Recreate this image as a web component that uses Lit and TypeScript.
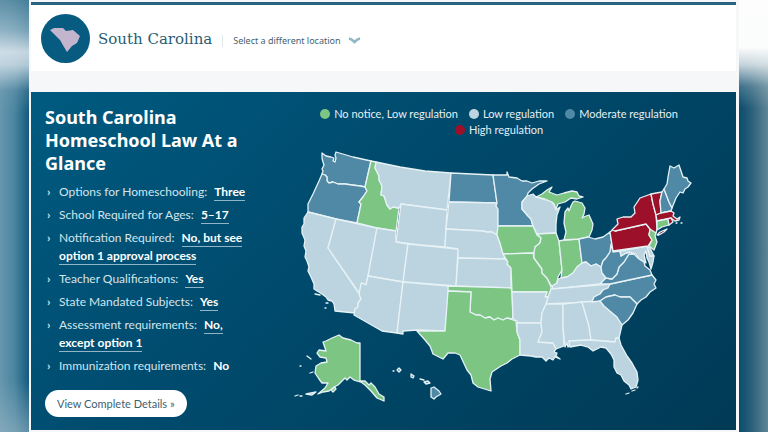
import { LitElement, html, css, svg } from 'lit';
import { customElement } from 'lit/decorators.js';

type Level = 'none' | 'low' | 'moderate' | 'high';

interface Region {
  name: string;
  level: Level;
  d: string;
}

interface Fact {
  label: string;
  value: string;
  link: boolean;
}

const LEGEND: { level: Level; text: string }[] = [
  { level: 'none', text: 'No notice, Low regulation' },
  { level: 'low', text: 'Low regulation' },
  { level: 'moderate', text: 'Moderate regulation' },
  { level: 'high', text: 'High regulation' },
];

const FACTS: Fact[] = [
  { label: 'Options for Homeschooling:', value: 'Three', link: true },
  { label: 'School Required for Ages:', value: '5–17', link: true },
  {
    label: 'Notification Required:',
    value: 'No, but see option 1 approval process',
    link: true,
  },
  { label: 'Teacher Qualifications:', value: 'Yes', link: true },
  { label: 'State Mandated Subjects:', value: 'Yes', link: true },
  { label: 'Assessment requirements:', value: 'No, except option 1', link: true },
  { label: 'Immunization requirements:', value: 'No', link: false },
];

const REGIONS: Region[] = [
  { name: 'Washington', level: 'moderate', d: 'M322 153L326 156 331 157 334 158 333 161 335 162 336 158 335 155 336 152 353 157 371 161 365 187 360 186 352 185 345 184 338 184 333 182 329 183 327 181 327 177 325 175 322 174 323 171 322 169 324 165 323 162 322 158Z' },
  { name: 'Oregon', level: 'moderate', d: 'M322 174L325 175 327 177 327 181 329 183 333 182 338 184 345 184 352 185 360 186 365 187 367 191 363 197 359 202 361 204 357 223 336 219 308 212 308 204 313 194 319 181Z' },
  { name: 'California', level: 'low', d: 'M308 212L336 219 328 248 359 294 361 299 358 303 358 307 355 309 355 313 335 311 334 304 332 301 328 300 326 297 322 294 314 289 314 284 311 277 308 271 309 267 307 261 305 257 306 251 304 246 305 240 302 233 302 227 304 224 304 218Z' },
  { name: 'Nevada', level: 'low', d: 'M336 219L377 228 368 276 366 285 362 283 361 284 360 294 328 248Z' },
  { name: 'Idaho', level: 'none', d: 'M371 161L376 162 375 168 379 176 379 180 382 186 381 195 384 196 387 205 390 209 393 207 399 208 396 231 377 228 357 223 361 204 359 202 363 197 367 191 365 187Z' },
  { name: 'Montana', level: 'low', d: 'M376 162L400 167 425 171 451 173 447 210 401 204 399 208 393 207 390 209 387 205 384 196 381 195 382 186 379 180 379 176 375 168Z' },
  { name: 'Wyoming', level: 'low', d: 'M401 204L447 210 445 247 420 245 396 242Z' },
  { name: 'Utah', level: 'low', d: 'M377 228L396 231 396 242 408 244 403 282 368 276Z' },
  { name: 'Colorado', level: 'low', d: 'M408 244L458 249 456 286 430 284 403 282Z' },
  { name: 'Arizona', level: 'low', d: 'M368 276L403 282 397 333 382 331 354 315 355 309 358 307 358 303 361 299 359 294 361 284 362 283 366 285Z' },
  { name: 'New Mexico', level: 'low', d: 'M403 282L449 286 445 331 417 330 403 331 403 334 397 333Z' },
  { name: 'North Dakota', level: 'moderate', d: 'M451 173L493 175 495 189 497 203 449 202Z' },
  { name: 'South Dakota', level: 'low', d: 'M449 202L497 203 496 206 498 209 498 226 497 235 492 232 487 232 483 231 446 229Z' },
  { name: 'Nebraska', level: 'low', d: 'M446 229L483 231 487 232 492 232 497 235 500 243 502 250 505 259 458 258 458 249 445 247Z' },
  { name: 'Kansas', level: 'low', d: 'M458 258L505 259 508 262 507 264 511 268 511 288 456 286Z' },
  { name: 'Oklahoma', level: 'none', d: 'M448 286L511 288 512 292 513 319 507 318 503 320 498 318 494 320 490 317 485 318 480 315 476 315 470 312 471 292 448 291Z' },
  { name: 'Texas', level: 'none', d: 'M448 291L471 292 470 312 476 315 480 315 485 318 490 317 494 320 498 318 503 320 507 318 516 321 517 332 520 340 520 355 512 359 507 363 501 366 492 372 490 379 491 391 478 387 473 383 471 375 467 370 460 355 455 353 448 353 443 359 433 354 430 346 425 340 417 331 445 331Z' },
  { name: 'Minnesota', level: 'moderate', d: 'M493 175L507 175 507 172 509 177 517 178 522 181 527 181 532 183 539 181 547 181 539 184 532 189 528 193 527 197 522 202 522 209 528 216 531 219 533 226 498 226 498 209 496 206 497 203 495 189Z' },
  { name: 'Wisconsin', level: 'low', d: 'M527 196L533 194 536 197 552 202 554 205 556 210 560 207 557 215 556 224 556 233 537 234 533 226 531 219 528 216 522 209 522 202Z' },
  { name: 'Iowa', level: 'none', d: 'M498 226L533 226 537 235 541 238 540 243 535 247 534 253 503 254 500 243 497 235Z' },
  { name: 'Missouri', level: 'none', d: 'M503 254L533 253 534 258 542 269 542 273 547 278 551 287 551 290 548 297 545 297 547 292 512 292 511 268 507 264 508 262Z' },
  { name: 'Illinois', level: 'none', d: 'M537 234L556 233 559 241 562 270 558 277 557 283 552 287 547 278 542 273 542 269 534 258 534 253 535 247 540 243 541 238Z' },
  { name: 'Indiana', level: 'none', d: 'M559 241L564 240 579 239 582 263 577 267 573 273 567 277 561 278 562 270Z' },
  { name: 'Michigan Lower', level: 'none', d: 'M564 240L566 232 564 223 565 212 568 208 569 211 571 206 573 202 575 201 582 203 585 208 584 214 582 218 586 216 589 215 593 224 592 230 589 237 579 239Z' },
  { name: 'Michigan Upper', level: 'none', d: 'M536 197L542 194 547 190 552 187 549 192 557 195 564 193 572 191 577 192 579 196 583 197 577 199 571 198 565 202 558 204 556 209 554 204 552 202 545 199Z' },
  { name: 'Ohio', level: 'moderate', d: 'M579 239L588 237 595 239 603 237 610 232 612 245 610 252 606 258 603 261 601 267 596 264 591 266 586 262 582 263Z' },
  { name: 'Kentucky', level: 'low', d: 'M561 278L567 277 573 273 577 267 582 263 586 262 591 266 596 264 601 267 602 273 606 278 600 284 553 289 552 286 557 283 558 279Z' },
  { name: 'Tennessee', level: 'low', d: 'M551 289L610 284 608 288 603 290 600 294 594 297 592 302 546 304 548 297Z' },
  { name: 'Arkansas', level: 'low', d: 'M512 292L547 292 545 297 548 297 546 304 542 313 541 323 517 323 517 321 513 319Z' },
  { name: 'Louisiana', level: 'low', d: 'M517 323L541 323 542 332 538 342 553 343 556 349 554 352 557 353 556 356 560 359 555 357 553 360 549 358 546 361 542 357 536 357 531 356 520 355 520 340 517 332Z' },
  { name: 'Mississippi', level: 'low', d: 'M546 304L563 304 563 327 564 346 556 349 553 343 538 342 542 332 541 323 542 313Z' },
  { name: 'Alabama', level: 'low', d: 'M563 304L582 302 589 326 591 340 569 341 570 345 568 347 567 343 565 347 563 327Z' },
  { name: 'Georgia', level: 'low', d: 'M582 302L600 301 604 306 611 312 617 317 622 325 619 338 616 338 615 342 591 340 589 326Z' },
  { name: 'Florida', level: 'low', d: 'M569 341L591 340 615 342 616 338 619 338 621 345 627 356 632 363 637 372 638 380 636 387 631 389 629 385 624 381 621 375 617 373 614 367 614 360 611 354 606 348 601 347 593 351 588 347 581 345 570 347Z' },
  { name: 'North Carolina', level: 'moderate', d: 'M610 284L652 275 656 280 654 284 656 288 650 292 646 297 641 300 637 304 630 297 620 297 615 295 606 297 600 301 592 302 594 297 600 294 603 290 608 288Z' },
  { name: 'South Carolina', level: 'moderate', d: 'M600 301L606 297 615 295 620 297 630 297 637 304 633 313 628 320 622 325 617 317 611 312 604 306Z' },
  { name: 'Virginia', level: 'moderate', d: 'M600 284L606 278 612 279 617 274 619 267 624 262 629 254 634 254 638 258 644 262 645 266 650 270 652 275 610 284Z' },
  { name: 'West Virginia', level: 'moderate', d: 'M611 244L613 252 620 251 621 256 626 253 630 252 634 254 629 254 624 262 619 267 617 274 612 279 606 278 602 273 601 267 603 261 606 258 610 252Z' },
  { name: 'Maryland', level: 'low', d: 'M620 251L647 246 650 256 654 256 653 262 651 269 649 262 647 258 646 251 644 255 646 263 639 259 636 254 630 252 626 253 621 256Z' },
  { name: 'Delaware', level: 'low', d: 'M647 246L650 248 654 256 650 256Z' },
  { name: 'Pennsylvania', level: 'high', d: 'M610 232L614 229 615 231 646 224 650 229 649 235 652 240 648 246 613 251Z' },
  { name: 'New Jersey', level: 'none', d: 'M650 229L656 232 655 236 657 242 654 250 649 246 652 240 649 235Z' },
  { name: 'New York', level: 'high', d: 'M612 230L618 224 617 219 623 217 631 217 635 213 634 207 640 198 651 194 653 204 656 215 657 229 656 233 650 229 646 224 615 231Z' },
  { name: 'Long Island', level: 'high', d: 'M657 235L660 232 667 229 664 232 659 235Z' },
  { name: 'Vermont', level: 'high', d: 'M651 194L662 192 660 201 661 213 656 215 653 204Z' },
  { name: 'New Hampshire', level: 'moderate', d: 'M662 192L664 189 669 202 672 208 671 211 661 213 660 201Z' },
  { name: 'Maine', level: 'moderate', d: 'M664 189L667 184 668 177 670 166 674 168 679 165 683 177 687 178 688 181 691 183 688 187 685 189 683 193 680 192 676 198 674 203 672 208 669 202Z' },
  { name: 'Massachusetts', level: 'high', d: 'M656 215L661 213 671 211 674 213 673 216 677 219 680 217 679 220 675 221 671 218 657 221Z' },
  { name: 'Connecticut', level: 'none', d: 'M657 221L668 219 669 225 662 227 657 230Z' },
  { name: 'Rhode Island', level: 'high', d: 'M668 219L671 218 673 222 669 225Z' },
  { name: 'Alaska', level: 'none', d: 'M323 342L326 341 332 338 339 335 343 338 351 340 357 343 360 343 360 381 365 381 369 385 371 383 375 387 379 394 384 397 384 401 377 398 371 391 365 385 361 382 354 380 350 377 347 380 345 378 342 381 338 385 334 387 329 391 323 392 318 394 325 388 328 383 322 383 319 379 315 373 316 366 321 363 327 362 326 358 320 357 317 353 319 350 326 351Z' },
  { name: 'Aleutian Islands', level: 'none', d: 'M306 394L311 393 316 392 312 395ZM295 396L298 395M300 396L302 396M331 390L335 387 336 389 333 392ZM307 356L311 359M313 372L310 373M300 366L301 366' },
  { name: 'Hawaii', level: 'moderate', d: 'M431 388L434 387 439 391 441 394 436 397 434 399 431 397ZM424 382L428 381 430 383 426 384ZM420 379L424 380M411 374L414 376 413 378 411 377ZM397 370L399 368 401 370 399 372ZM393 371L394 371' },
  { name: 'Channel Islands', level: 'low', d: 'M315 294L320 295M326 303L328 303M325 308L326 308' },
  { name: 'Florida Keys', level: 'low', d: 'M626 394L629 393M632 391L635 390M637 388L638 387' },
  { name: 'Nantucket', level: 'high', d: 'M676 223L677 223M681 223L682 223' },
];

@customElement('state-header')
export class StateHeader extends LitElement {
  static styles = css`
    :host {
      display: block;
    }

    .header {
      display: flex;
      align-items: center;
      gap: 8px;
      padding: 9px 10px 8px;
      border-top: 3px solid #28627f;
      background: #fff;
    }

    .header__badge {
      flex: none;
      width: 49px;
      height: 49px;
    }

    .header__text {
      display: flex;
      align-items: baseline;
    }

    .header__name {
      margin: 0;
      color: #285d74;
      font: 15px/24px 'DejaVu Serif', serif;
    }

    .header__picker {
      display: grid;
      align-items: center;
      margin-left: 10px;
      padding-left: 10px;
      border-left: 1px solid #e2e6e8;
      line-height: 9px;
    }

    .header__select,
    .header__chevron {
      grid-area: 1 / 1;
    }

    .header__select {
      appearance: none;
      margin: 0;
      padding: 0 20px 0 0;
      border: 0;
      background: transparent;
      color: #47636f;
      font: 9px/12px 'Noto Sans', sans-serif;
    }

    .header__chevron {
      justify-self: end;
      width: 13px;
      height: 7px;
      pointer-events: none;
    }
  `;

  render() {
    return html`
      <header class="header">
        <svg class="header__badge" viewBox="0 0 49 49" aria-hidden="true">
          <circle cx="24.5" cy="24.5" r="24.5" fill="#075a80" />
          <path
            d="M9 16L13 14 22 14 25 17 32 16 39 22 36 29 31 32 26 38 23 33 19 26 14 21Z"
            fill="#c3b5ce"
          />
        </svg>
        <div class="header__text">
          <h1 class="header__name">South Carolina</h1>
          <div class="header__picker">
            <select class="header__select" aria-label="Location">
              <option>Select a different location</option>
              ${['Georgia', 'North Carolina', 'Tennessee', 'Virginia'].map(
                (name) => html`<option>${name}</option>`
              )}
            </select>
            <svg class="header__chevron" viewBox="0 0 13 7" aria-hidden="true">
              <path
                d="M1 1.5C3 2 5 3.5 6.5 5C8 3.5 10 2 12 1.5"
                fill="none"
                stroke="#8fbac2"
                stroke-width="2.5"
              />
            </svg>
          </div>
        </div>
      </header>
    `;
  }
}

@customElement('law-summary')
export class LawSummary extends LitElement {
  static styles = css`
    :host {
      display: block;
      color: #fff;
      font-family: Lato, sans-serif;
    }

    .summary__title {
      margin: 0 0 8px;
      font-family: 'Noto Sans', sans-serif;
      font-size: 18px;
      font-weight: 700;
      line-height: 23px;
    }

    .summary__list {
      display: grid;
      gap: 5px;
      margin: 0 0 15px;
      padding: 0;
      list-style: none;
      font-size: 12px;
      line-height: 18px;
    }

    .summary__item {
      display: flex;
      color: #d3e4ec;
    }

    .summary__item::before {
      flex: none;
      width: 14px;
      box-sizing: border-box;
      padding-left: 2px;
      content: '›';
      font-weight: 700;
    }

    .summary__value {
      margin-left: 4px;
      color: #fff;
      font-weight: 700;
      text-decoration: none;
    }

    .summary__value--link {
      padding-bottom: 1px;
      border-bottom: 1px solid #8fb5c6;
    }

    .summary__button {
      display: block;
      padding: 0 12px;
      border: 0;
      border-radius: 14px;
      background: #fff;
      color: #3d5f70;
      font: 11px/27px Lato, sans-serif;
    }
  `;

  renderValue(fact: Fact) {
    return fact.link
      ? html`<a class="summary__value summary__value--link" href="#">${fact.value}</a>`
      : html`<strong class="summary__value">${fact.value}</strong>`;
  }

  render() {
    return html`
      <h2 class="summary__title">South Carolina Homeschool Law At a Glance</h2>
      <ul class="summary__list">
        ${FACTS.map(
          (fact) => html`
            <li class="summary__item">
              <span>${fact.label} ${this.renderValue(fact)}</span>
            </li>
          `
        )}
      </ul>
      <button class="summary__button" type="button">
        View Complete Details »
      </button>
    `;
  }
}

@customElement('regulation-map')
export class RegulationMap extends LitElement {
  static styles = css`
    :host {
      display: block;
    }

    .legend {
      display: flex;
      flex-wrap: wrap;
      justify-content: center;
      column-gap: 11px;
      margin: 0 0 8px;
      padding: 0;
      list-style: none;
      color: #e4eff4;
      font: 11px/16px Lato, sans-serif;
    }

    .legend__item {
      display: flex;
      align-items: center;
      gap: 4px;
    }

    .legend__dot {
      width: 10px;
      height: 10px;
      border-radius: 50%;
    }

    .legend__dot--none {
      background: #7dc582;
    }

    .legend__dot--low {
      background: #bcd5e1;
    }

    .legend__dot--moderate {
      background: #4f89a5;
    }

    .legend__dot--high {
      background: #9d1029;
    }

    .map {
      display: block;
      width: 100%;
    }

    .map__state {
      stroke: #e6f2f6;
      stroke-width: 1.3;
      stroke-linejoin: round;
      stroke-linecap: round;
    }

    .map__state--none {
      fill: #7dc582;
    }

    .map__state--low {
      fill: #bcd4df;
    }

    .map__state--moderate {
      fill: #4f89a5;
    }

    .map__state--high {
      fill: #9d1029;
    }
  `;

  render() {
    return html`
      <ul class="legend">
        ${LEGEND.map(
          ({ level, text }) => html`
            <li class="legend__item">
              <span class="legend__dot legend__dot--${level}"></span>${text}
            </li>
          `
        )}
      </ul>
      <svg class="map" viewBox="290 146 418 262" role="img" aria-label="Homeschool regulation by state">
        ${REGIONS.map(
          ({ name, level, d }) =>
            svg`<path class="map__state map__state--${level}" data-name=${name} d=${d} />`
        )}
      </svg>
    `;
  }
}

@customElement('app-root')
export class AppRoot extends LitElement {
  static styles = css`
    :host {
      display: grid;
      grid-template-columns: 29fr 710fr 29fr;
      min-height: 100vh;
    }

    .side--left {
      background:
        linear-gradient(
          to bottom,
          rgba(90, 140, 165, 0.7) 0%,
          rgba(160, 190, 205, 0.7) 7%,
          rgba(226, 233, 240, 0.85) 12%,
          rgba(215, 226, 234, 0.8) 15%,
          rgba(120, 160, 180, 0.3) 21%,
          transparent 26%,
          transparent 88%,
          rgba(150, 180, 195, 0.6) 100%
        ),
        linear-gradient(to right, #6697ae, #4a859f 50%, #135a7e);
    }

    .side--right {
      background:
        linear-gradient(
          to bottom,
          #fdfdfe 0%,
          #fbfcfc 11%,
          rgba(240, 244, 246, 0.8) 15%,
          rgba(180, 200, 210, 0.3) 20%,
          transparent 25%
        ),
        linear-gradient(to right, #0b4c6d, #2c617b 45%, #5f8595);
    }

    .page {
      padding: 2px 3px 2px 2px;
      background: #f6f7f8;
    }

    .panel {
      display: grid;
      grid-template-columns: 231fr 474fr;
      margin-top: 21px;
      background: linear-gradient(135deg, #005a80 0%, #00486a 50%, #003a55 100%);
    }

    .panel__summary {
      padding: 14px 8px 13px 14px;
    }

    .panel__map {
      padding: 14px 28px 8px;
    }
  `;

  render() {
    return html`
      <div class="side--left"></div>
      <main class="page">
        <state-header></state-header>
        <section class="panel">
          <law-summary class="panel__summary"></law-summary>
          <regulation-map class="panel__map"></regulation-map>
        </section>
      </main>
      <div class="side--right"></div>
    `;
  }
}
